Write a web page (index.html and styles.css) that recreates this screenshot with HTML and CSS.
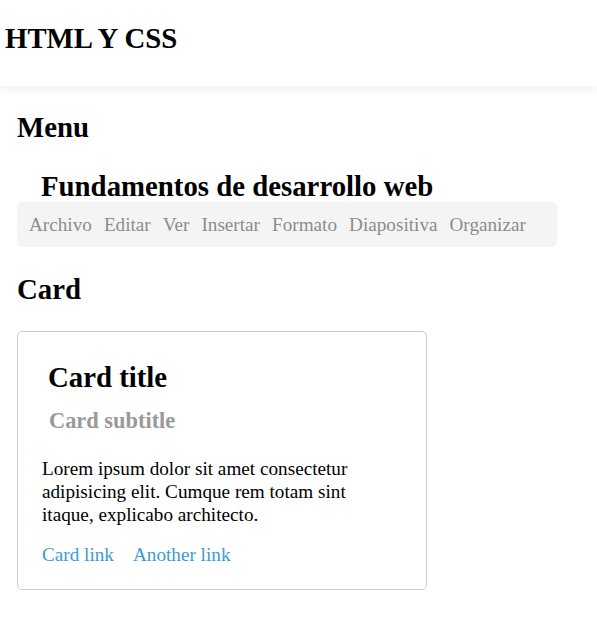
FILE: index.html
```html
<!DOCTYPE html>
<html lang="es">
<head>
<meta charset="utf-8">
<title>HTML Y CSS</title>
<link rel="stylesheet" href="styles.css">
</head>
<body>
<header class="site-header">
  <h1 class="site-title">HTML Y CSS</h1>
</header>
<main class="content">
  <section class="section">
    <h2 class="section-title">Menu</h2>
    <div class="menu">
      <h2 class="menu-title">Fundamentos de desarrollo web</h2>
      <nav class="menu-bar">
        <a class="menu-item">Archivo</a>
        <a class="menu-item">Editar</a>
        <a class="menu-item">Ver</a>
        <a class="menu-item">Insertar</a>
        <a class="menu-item">Formato</a>
        <a class="menu-item">Diapositiva</a>
        <a class="menu-item">Organizar</a>
      </nav>
    </div>
  </section>
  <section class="section section-card">
    <h2 class="section-title">Card</h2>
    <div class="card">
      <h2 class="card-title">Card title</h2>
      <h3 class="card-subtitle">Card subtitle</h3>
      <p class="card-text">Lorem ipsum dolor sit amet consectetur adipisicing elit. Cumque rem totam sint itaque, explicabo architecto.</p>
      <div class="card-links">
        <a class="card-link" href="#">Card link</a>
        <a class="card-link" href="#">Another link</a>
      </div>
    </div>
  </section>
</main>
</body>
</html>
```

FILE: styles.css
```css
* { box-sizing: border-box; }

html, body {
  margin: 0;
  padding: 0;
  background: #fff;
}

body {
  font-family: "Liberation Serif", "Times New Roman", serif;
  font-size: 19.2px;
  color: #000;
}

.site-header {
  height: 86px;
  padding: 22px 5px 0;
  background: #fff;
  box-shadow: 0 3px 10px rgba(0, 0, 0, 0.07);
  position: relative;
}

.site-title {
  margin: 0;
  font-size: 28.8px;
  font-weight: bold;
}

.content {
  padding: 0 17px;
}

.section-title {
  margin: 25px 0 0;
  font-size: 28.8px;
  font-weight: bold;
}

.section-card .section-title {
  margin-top: 26px;
}

.menu {
  margin-top: 26px;
}

.menu-title {
  margin: 0 0 -1px;
  padding-left: 24px;
  font-size: 28.8px;
  font-weight: bold;
}

.menu-bar {
  width: 540px;
  display: flex;
  gap: 12px;
  padding: 12px 12px 11px;
  background: #f4f4f4;
  border-radius: 5px;
}

.menu-item {
  color: #8c8c8c;
  text-decoration: none;
}

.card {
  width: 410px;
  margin-top: 25px;
  padding: 29px 24px 23px;
  border: 1px solid #cccccc;
  border-radius: 5px;
}

.card-title {
  margin: 0;
  padding-left: 6px;
  font-size: 28.8px;
  font-weight: bold;
}

.card-subtitle {
  margin: 14px 0 0;
  padding-left: 7px;
  font-size: 22.4px;
  font-weight: bold;
  color: #999;
}

.card-text {
  margin: 23px 0 0;
  line-height: 23px;
}

.card-links {
  display: flex;
  gap: 19px;
  margin-top: 18px;
}

.card-link {
  color: #3a9bd5;
  text-decoration: none;
}
```
